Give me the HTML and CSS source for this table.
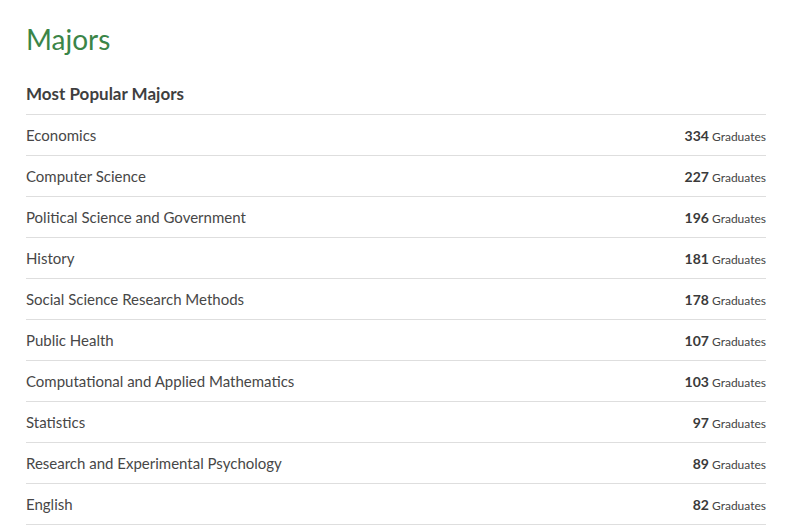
FILE: index.html
```html
<!DOCTYPE html>
<html>
<head>
<meta charset="utf-8">
<link rel="stylesheet" href="styles.css">
</head>
<body>
<main class="page">
  <h1 class="title">Majors</h1>
  <h2 class="subtitle">Most Popular Majors</h2>
  <ul class="list">
    <li class="row"><span class="name">Economics</span><span class="count"><b>334</b> Graduates</span></li>
    <li class="row"><span class="name">Computer Science</span><span class="count"><b>227</b> Graduates</span></li>
    <li class="row"><span class="name">Political Science and Government</span><span class="count"><b>196</b> Graduates</span></li>
    <li class="row"><span class="name">History</span><span class="count"><b>181</b> Graduates</span></li>
    <li class="row"><span class="name">Social Science Research Methods</span><span class="count"><b>178</b> Graduates</span></li>
    <li class="row"><span class="name">Public Health</span><span class="count"><b>107</b> Graduates</span></li>
    <li class="row"><span class="name">Computational and Applied Mathematics</span><span class="count"><b>103</b> Graduates</span></li>
    <li class="row"><span class="name">Statistics</span><span class="count"><b>97</b> Graduates</span></li>
    <li class="row"><span class="name">Research and Experimental Psychology</span><span class="count"><b>89</b> Graduates</span></li>
    <li class="row"><span class="name">English</span><span class="count"><b>82</b> Graduates</span></li>
  </ul>
</main>
</body>
</html>
```

FILE: styles.css
```css
html, body {
  margin: 0;
  padding: 0;
  background: #ffffff;
}
body {
  font-family: "Lato", "Open Sans", sans-serif;
  color: #454545;
}
.page {
  width: 740px;
  padding: 19px 0 0 26px;
}
.title {
  margin: 0;
  font-size: 28px;
  font-weight: 400;
  color: #3b8548;
  line-height: 40px;
}
.subtitle {
  margin: 25px 0 0;
  font-size: 17px;
  font-weight: 700;
  color: #3f3f3f;
  line-height: 20px;
  padding-bottom: 10px;
}
.list {
  list-style: none;
  margin: 0;
  padding: 0;
  border-top: 1px solid #dedede;
}
.row {
  display: flex;
  justify-content: space-between;
  align-items: center;
  height: 40px;
  border-bottom: 1px solid #dedede;
  font-size: 15px;
}
.name {
  color: #474747;
}
.count {
  font-size: 12px;
  color: #444;
}
.count b {
  font-size: 14px;
  font-weight: 700;
  color: #3a3a3a;
}
```
